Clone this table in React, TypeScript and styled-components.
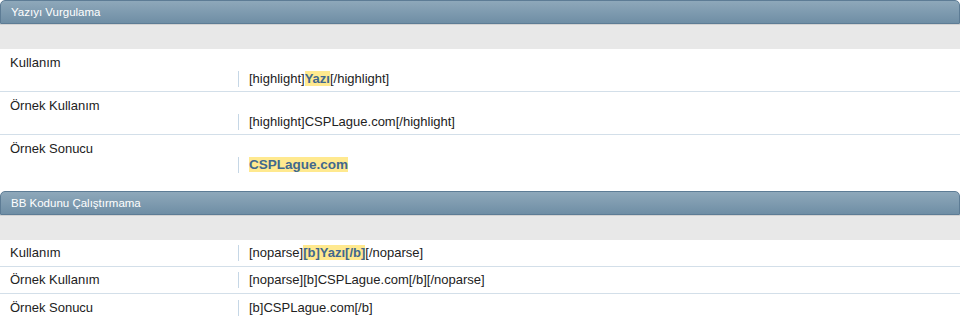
import React from "react";
import styled, { createGlobalStyle } from "styled-components";

const GlobalStyle = createGlobalStyle`
  html, body { margin: 0; padding: 0; background: #ffffff; }
  body { font-family: "Liberation Sans", Arial, sans-serif; font-size: 13px; color: #222; }
`;

const Page = styled.div`
  display: flex;
  flex-direction: column;
  gap: 13px;
`;

const Section = styled.section`
  display: flex;
  flex-direction: column;
`;

const Header = styled.div`
  height: 22px;
  border: 1px solid #5d7c95;
  border-radius: 5px 5px 0 0;
  background: linear-gradient(#8ea8ba, #6f8ea5);
  color: #ffffff;
  font-size: 11.5px;
  line-height: 22px;
  padding-left: 10px;
`;

const SubBar = styled.div`
  height: 25px;
  background: #e8e8e8;
  border-top: 1px solid #d2d2d2;
  box-sizing: border-box;
`;

const Row = styled.div<{ $stacked?: boolean; $last?: boolean }>`
  display: grid;
  grid-template-columns: 238px 1fr;
  box-sizing: border-box;
  height: ${(p) => (p.$stacked ? 43 : 27)}px;
  border-bottom: ${(p) => (p.$last ? "none" : "1px solid #d3dfe9")};
  align-items: ${(p) => (p.$stacked ? "start" : "center")};
  padding-top: ${(p) => (p.$stacked ? 6 : 0)}px;
`;

const Label = styled.div`
  padding-left: 10px;
  line-height: 16px;
`;

const Value = styled.div<{ $stacked?: boolean }>`
  border-left: 1px solid #c6d7e6;
  padding-left: 10px;
  line-height: 16px;
  margin-top: ${(p) => (p.$stacked ? 16 : 0)}px;
`;

const Mark = styled.span`
  background: #ffe98f;
  color: #41688d;
  font-weight: bold;
`;

const BigMark = styled(Mark)`
  font-size: 13.5px;
`;

type RowData = { label: string; value: React.ReactNode };

const sections: { title: string; stacked: boolean; rows: RowData[] }[] = [
  {
    title: "Yazıyı Vurgulama",
    stacked: true,
    rows: [
      { label: "Kullanım", value: <>[highlight]<Mark>Yazı</Mark>[/highlight]</> },
      { label: "Örnek Kullanım", value: "[highlight]CSPLague.com[/highlight]" },
      { label: "Örnek Sonucu", value: <BigMark>CSPLague.com</BigMark> },
    ],
  },
  {
    title: "BB Kodunu Çalıştırmama",
    stacked: false,
    rows: [
      { label: "Kullanım", value: <>[noparse]<Mark>[b]Yazı[/b]</Mark>[/noparse]</> },
      { label: "Örnek Kullanım", value: "[noparse][b]CSPLague.com[/b][/noparse]" },
      { label: "Örnek Sonucu", value: "[b]CSPLague.com[/b]" },
    ],
  },
];

export default function App() {
  return (
    <>
      <GlobalStyle />
      <Page>
        {sections.map((s) => (
          <Section key={s.title}>
            <Header>{s.title}</Header>
            <SubBar />
            {s.rows.map((r, i) => (
              <Row key={r.label} $stacked={s.stacked} $last={i === s.rows.length - 1}>
                <Label>{r.label}</Label>
                <Value $stacked={s.stacked}>{r.value}</Value>
              </Row>
            ))}
          </Section>
        ))}
      </Page>
    </>
  );
}
